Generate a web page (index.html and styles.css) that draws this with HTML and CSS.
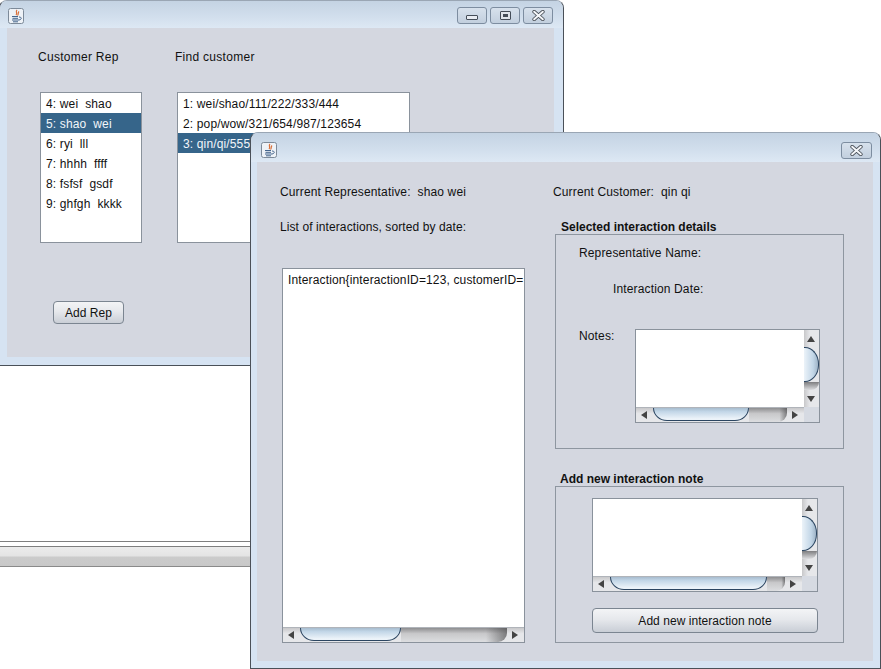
FILE: index.html
```html
<!DOCTYPE html>
<html lang="en">

<head>
    <meta charset="UTF-8">
    <title>Customer interactions</title>
    <link rel="stylesheet" href="styles.css">
</head>

<body>
    <svg class="defs" width="0" height="0">
        <symbol id="java" viewBox="0 0 16 16">
            <rect x="0.5" y="0.5" width="15" height="15" rx="2" fill="#eef2f7" stroke="#7d8a99" />
            <path d="M9 2 C7 4 10 5 8 7 M11 3.5 C9.5 5 11 6 9.5 7.5" fill="none" stroke="#d9703a" stroke-width="1.2" />
            <path d="M4 8.5 H10 M4.5 10.3 H10 M4 12 H11 M5 13.8 H10" fill="none" stroke="#44658c" />
            <path d="M11 9 C14 9 14 11.5 11 12" fill="none" stroke="#44658c" />
        </symbol>
        <symbol id="close" viewBox="0 0 12 10">
            <path d="M2 1.5 L10 8.5 M10 1.5 L2 8.5" fill="none" stroke="#4a5058" stroke-width="3.4" stroke-linecap="round" />
            <path d="M2 1.5 L10 8.5 M10 1.5 L2 8.5" fill="none" stroke="#f4f6f9" stroke-width="1.8" stroke-linecap="round" />
        </symbol>
    </svg>

    <!-- back window -->
    <div class="window back-window">
        <div class="titlebar">
            <svg class="java-icon"><use href="#java"></use></svg>
            <div class="win-buttons">
                <button class="win-btn"><span class="glyph-min"></span></button>
                <button class="win-btn"><span class="glyph-max"></span></button>
                <button class="win-btn"><svg class="glyph-close"><use href="#close"></use></svg></button>
            </div>
        </div>
        <div class="panel back-panel">
            <div class="back-columns">
                <div class="rep-col">
                    <div class="back-label">Customer Rep</div>
                    <ul class="list">
                        <li>4: wei&nbsp; shao</li>
                        <li class="selected">5: shao&nbsp; wei</li>
                        <li>6: ryi&nbsp; lll</li>
                        <li>7: hhhh&nbsp; ffff</li>
                        <li>8: fsfsf&nbsp; gsdf</li>
                        <li>9: ghfgh&nbsp; kkkk</li>
                    </ul>
                </div>
                <div class="customer-col">
                    <div class="back-label">Find customer</div>
                    <ul class="list">
                        <li>1: wei/shao/111/222/333/444</li>
                        <li>2: pop/wow/321/654/987/123654</li>
                        <li class="selected">3: qin/qi/555</li>
                    </ul>
                </div>
            </div>
            <button class="btn add-rep">Add Rep</button>
        </div>
    </div>

    <!-- something else behind, only a strip of it shows -->
    <div class="behind-strip">
        <div class="strip-bar"></div>
    </div>

    <!-- front window -->
    <div class="window front-window">
        <div class="titlebar">
            <svg class="java-icon"><use href="#java"></use></svg>
            <div class="win-buttons">
                <button class="win-btn"><svg class="glyph-close"><use href="#close"></use></svg></button>
            </div>
        </div>
        <div class="panel front-panel">
            <div class="left-col">
                <div class="label">Current Representative:&nbsp; shao wei</div>
                <div class="label list-label">List of interactions, sorted by date:</div>
                <div class="scroll-pane big-pane">
                    <div class="pane-view"><div class="pane-text">Interaction{interactionID=123, customerID=</div></div>
                    <div class="hbar">
                        <span class="arrow arrow-left"></span>
                        <span class="hthumb thumb-big"></span>
                        <span class="hshadow shadow-big"></span>
                        <span class="arrow arrow-right"></span>
                    </div>
                </div>
            </div>
            <div class="right-col">
                <div class="label">Current Customer:&nbsp; qin qi</div>
                <div class="section-title first-title">Selected interaction details</div>
                <div class="group details-group">
                    <div class="label">Representative Name:</div>
                    <div class="label date-label">Interaction Date:</div>
                    <div class="notes-row">
                        <div class="label notes-label">Notes:</div>
                        <div class="scroll-pane notes-pane">
                            <div class="pane-view"></div>
                            <div class="vbar">
                                <span class="arrow arrow-up"></span>
                                <span class="vthumb"></span>
                                <span class="vshadow"></span>
                                <span class="arrow arrow-down"></span>
                            </div>
                            <div class="hbar">
                                <span class="arrow arrow-left"></span>
                                <span class="hthumb thumb-notes"></span>
                                <span class="hshadow shadow-notes"></span>
                                <span class="arrow arrow-right"></span>
                            </div>
                            <div class="corner"></div>
                        </div>
                    </div>
                </div>
                <div class="section-title second-title">Add new interaction note</div>
                <div class="group add-group">
                    <div class="scroll-pane add-pane">
                        <div class="pane-view"></div>
                        <div class="vbar">
                            <span class="arrow arrow-up"></span>
                            <span class="vthumb"></span>
                            <span class="vshadow"></span>
                            <span class="arrow arrow-down"></span>
                        </div>
                        <div class="hbar">
                            <span class="arrow arrow-left"></span>
                            <span class="hthumb thumb-add"></span>
                            <span class="hshadow shadow-add"></span>
                            <span class="arrow arrow-right"></span>
                        </div>
                        <div class="corner"></div>
                    </div>
                    <button class="btn add-note">Add new interaction note</button>
                </div>
            </div>
        </div>
    </div>
</body>

</html>
```

FILE: styles.css
```css
* {
    box-sizing: border-box;
}

body {
    margin: 0;
    width: 881px;
    height: 669px;
    overflow: hidden;
    position: relative;
    background-color: #fff;
    font-family: "Liberation Sans", Arial, sans-serif;
    font-size: 12px;
    line-height: 14px;
    letter-spacing: 0.14px;
    color: #111;
}

.defs {
    position: absolute;
}

/* windows */
.window {
    position: absolute;
    display: flex;
    flex-direction: column;
    background-color: #d6e3f2;
    border: 1px solid #4a5058;
    border-top-color: #9aa6b4;
    border-radius: 8px 8px 0 0;
}

.back-window {
    left: -1px;
    top: 0;
    width: 565px;
    height: 366px;
    padding: 0 9px 8px 7px;
}

.front-window {
    left: 250px;
    top: 132px;
    width: 631px;
    height: 537px;
    padding: 0 7px 7px 6px;
}

.titlebar {
    flex: none;
    height: 27px;
    margin: 0 -9px 0 -7px;
    padding: 2px 10px 0 8px;
    display: flex;
    align-items: center;
    justify-content: space-between;
    border-radius: 7px 7px 0 0;
    background: linear-gradient(#c4d3e3, #d2dfed 60%, #dde8f4);
}

.front-window .titlebar {
    height: 29px;
    margin: 0 -7px 0 -6px;
    padding: 9px 8px 0 10px;
    align-items: flex-start;
}

.java-icon {
    width: 16px;
    height: 16px;
}

.win-buttons {
    display: flex;
    gap: 3px;
}

.win-btn {
    width: 30px;
    height: 17px;
    padding: 0;
    display: flex;
    align-items: center;
    justify-content: center;
    border: 1px solid #7d8da0;
    border-radius: 3px;
    background: linear-gradient(#d7e1ec, #c2cfde);
}

.front-window .win-btn {
    width: 31px;
}

.glyph-min {
    width: 12px;
    height: 5px;
    margin-top: 4px;
    background-color: #e8ecf2;
    border: 1px solid #444d58;
    border-radius: 1px;
}

.glyph-max {
    width: 11px;
    height: 9px;
    background-color: #dfe5ec;
    border: 1px solid #444d58;
    border-radius: 1px;
    position: relative;
}

.glyph-max::after {
    content: "";
    position: absolute;
    left: 2px;
    top: 2px;
    width: 5px;
    height: 3px;
    background-color: #444d58;
}

.glyph-close {
    width: 13px;
    height: 11px;
}

.panel {
    flex: 1;
    min-height: 0;
    background-color: #d4d7e0;
}

/* back window content */
.back-panel {
    padding: 22px 0 0 33px;
}

.back-columns {
    display: flex;
    gap: 35px;
}

.back-label {
    margin-left: -2px;
    margin-bottom: 28px;
    letter-spacing: 0.28px;
}

.rep-col {
    width: 102px;
}

.customer-col {
    width: 233px;
}

.list {
    list-style: none;
    margin: 0;
    padding: 0;
    height: 151px;
    background-color: #fff;
    border: 1px solid #8a929c;
}

.list li {
    height: 20px;
    line-height: 22px;
    padding-left: 5px;
    white-space: nowrap;
    overflow: hidden;
}

.list .selected {
    background-color: #36658a;
    color: #f2f6fa;
}

.btn {
    display: block;
    font-family: inherit;
    font-size: 12px;
    letter-spacing: 0.05px;
    color: #111;
    padding: 0;
    border: 1px solid #7b8591;
    border-radius: 4px;
    background: linear-gradient(#f3f4f6, #e6e8ec 45%, #c9ced6);
}

.add-rep {
    width: 71px;
    height: 23px;
    margin: 58px 0 0 13px;
}

/* the strip behind */
.behind-strip {
    position: absolute;
    left: 0;
    top: 541px;
    width: 250px;
    height: 26px;
    padding-top: 4px;
    border-top: 1px solid #7f7f7f;
}

.strip-bar {
    height: 21px;
    border-top: 1px solid #7f7f7f;
    border-bottom: 1px solid #8a8a8a;
    background: linear-gradient(#ececec, #e4e4e4 45%, #cbcbcb 55%, #c8c8c8);
}

/* front window content */
.front-panel {
    display: flex;
    padding: 23px 0 0 23px;
}

.left-col {
    width: 273px;
}

.list-label {
    margin-top: 21px;
    margin-bottom: 34px;
    letter-spacing: 0.09px;
}

.section-title {
    font-weight: bold;
    letter-spacing: 0;
}

.first-title {
    margin: 21px 0 0 8px;
}

.second-title {
    margin: 23px 0 0 7px;
}

.group {
    width: 289px;
    margin-left: 2px;
    border: 1px solid #8e96a0;
}

.details-group {
    height: 215px;
    padding: 11px 0 0 23px;
}

.date-label {
    margin: 22px 0 0 34px;
}

.notes-row {
    display: flex;
    margin-top: 33px;
}

.notes-label {
    width: 56px;
}

.add-group {
    height: 157px;
    padding: 11px 0 0 36px;
}

.add-note {
    width: 226px;
    height: 25px;
    margin-top: 16px;
}

/* scroll panes */
.scroll-pane {
    display: grid;
    grid-template-columns: 1fr 15px;
    grid-template-rows: 1fr 15px;
    border: 1px solid #8a929c;
    background-color: #d6dae2;
}

.big-pane {
    width: 243px;
    height: 375px;
    margin-left: 2px;
    grid-template-columns: 1fr;
}

.notes-pane {
    width: 185px;
    height: 94px;
}

.add-pane {
    width: 226px;
    height: 94px;
}

.pane-view {
    background-color: #fff;
    overflow: hidden;
    min-width: 0;
}

.pane-text {
    padding: 4px 0 0 5px;
    white-space: nowrap;
}

.hbar {
    display: flex;
    align-items: stretch;
    overflow: hidden;
    background: linear-gradient(#c8c8ca, #e6e7ea 40%, #e6e7ea);
    border-top: 1px solid #b0b4ba;
}

.vbar {
    display: flex;
    flex-direction: column;
    overflow: hidden;
    background: linear-gradient(90deg, #c8c8ca, #e6e7ea 40%, #e6e7ea);
}

.corner {
    background-color: #d6dae2;
}

.arrow {
    flex: none;
    position: relative;
    display: block;
}

.arrow::after {
    content: "";
    position: absolute;
    border-style: solid;
    border-color: transparent;
}

.hbar .arrow {
    width: 17px;
}

.hbar .arrow-right {
    flex: 1;
}

.vbar .arrow {
    height: 17px;
}

.vbar .arrow-down {
    flex: 1;
}

.arrow-left::after {
    left: 5px;
    top: 3px;
    border-width: 4px 6px 4px 0;
    border-right-color: #444;
}

.arrow-right::after {
    left: 5px;
    top: 3px;
    border-width: 4px 0 4px 6px;
    border-left-color: #444;
}

.arrow-up::after {
    left: 3px;
    top: 6px;
    border-width: 0 4px 6px;
    border-bottom-color: #444;
}

.arrow-down::after {
    left: 3px;
    top: 6px;
    border-width: 6px 4px 0;
    border-top-color: #444;
}

.hthumb {
    flex: none;
    height: 15px;
    margin-top: -2px;
    border: 1px solid #2b4561;
    border-radius: 0 0 14px 14px / 0 0 13px 13px;
    background: linear-gradient(#9fb4c7, #c2d6e7 35%, #ecf3f9 90%);
}

.hshadow {
    flex: none;
    border-radius: 0 0 9px 0;
    background:
        linear-gradient(90deg, transparent 80%, rgba(70, 70, 72, 0.6)),
        linear-gradient(#8e8e90, #c8c8ca 40%, #dcdde0);
}

.vthumb {
    flex: none;
    height: 35px;
    width: 15px;
    border: 1px solid #2b4561;
    border-left: none;
    border-radius: 0 14px 14px 0 / 0 17px 17px 0;
    background: linear-gradient(90deg, #ecf3f9, #c2d6e7 65%, #9fb4c7);
}

.vshadow {
    flex: none;
    height: 8px;
    border-radius: 0 0 9px 0;
    background: linear-gradient(#7e7e80, #dcdde0);
}

.thumb-big {
    width: 101px;
}

.shadow-big {
    width: 106px;
}

.thumb-notes {
    width: 96px;
}

.shadow-notes {
    width: 38px;
}

.thumb-add {
    width: 157px;
}

.shadow-add {
    width: 18px;
}
```
